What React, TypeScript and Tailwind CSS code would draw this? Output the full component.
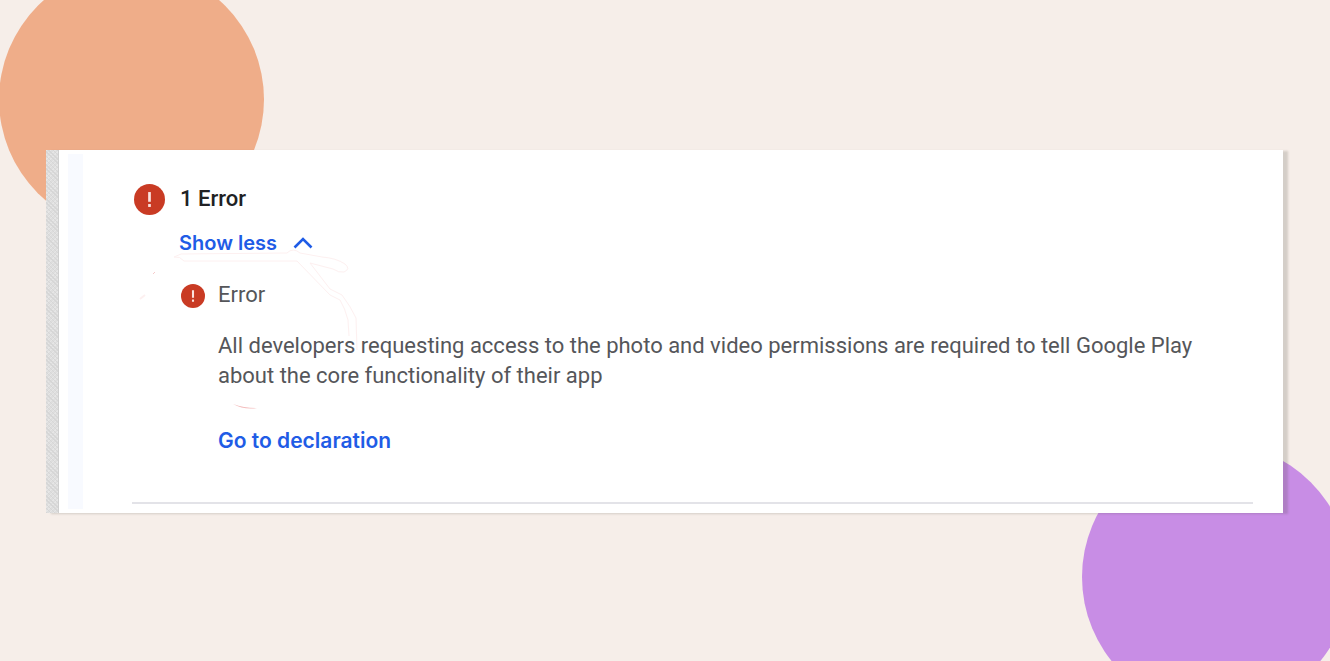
import { useState } from 'react';

interface ErrorItem {
  title: string;
  message: string;
  action: string;
}

const errors: ErrorItem[] = [
  {
    title: 'Error',
    message:
      'All developers requesting access to the photo and video permissions are required to tell Google Play about the core functionality of their app',
    action: 'Go to declaration',
  },
];

function ErrorIcon({ className }: { className: string }) {
  return (
    <svg viewBox="0 0 30 30" className={className} aria-hidden="true">
      <circle cx="15" cy="15" r="15" fill="#c93b24" />
      <rect x="13.7" y="7.8" width="2.6" height="9.4" fill="#fbe3df" />
      <rect x="13.7" y="19.4" width="2.6" height="2.8" fill="#fbe3df" />
    </svg>
  );
}

// Faint leftover pen strokes on the card
function PenMarks() {
  return (
    <svg
      className="pointer-events-none absolute top-0 left-0"
      width="340"
      height="280"
      viewBox="0 0 340 280"
      fill="none"
      aria-hidden="true"
    >
      <g stroke="#fdf0f0">
        <path d="M128 107 L135 104 L241 103 Q247 97 254 103 L276 107 Q290 108 299 114 Q305 119 298 122 Q293 123 287 119 L264 113" />
        <path d="M128 107 Q134 106 138 111 L251 111 L284 145 L294 150 Q299 158 302 170 L303 186" />
        <path d="M264 113 L284 139 L296 145 Q305 157 310 168 L311 200" />
        <path d="M107 124 L109 122" stroke="#f6caca" />
        <path d="M94 149 L99 145" strokeWidth="2" />
      </g>
      <path d="M187 254 Q198 258 211 258 Q198 260 187 254Z" fill="#f3b9b9" />
    </svg>
  );
}

export default function App() {
  const [expanded, setExpanded] = useState(true);

  return (
    <main className="relative min-h-screen overflow-hidden bg-[#f6eee9] pt-[150px] pr-[47px] pb-12 pl-[46px] font-['Roboto',sans-serif]">
      {/* Background circles */}
      <div className="absolute -top-[33px] -left-px size-[265px] rounded-full bg-[#efad89]" />
      <div className="absolute top-[443px] left-[1082px] size-[268px] rounded-full bg-[#c88de5]" />

      <section className="relative flex bg-white shadow-[5px_1px_2px_rgba(60,60,50,0.18)]">
        {/* Textured edge */}
        <div className="w-[13px] shrink-0 border-r border-[#cfcfcf] bg-[#dedede] bg-[repeating-linear-gradient(45deg,#d6d6d6_0,#d6d6d6_1px,transparent_1px,transparent_3px),repeating-linear-gradient(-45deg,#e6e6e6_0,#e6e6e6_1px,transparent_1px,transparent_3px)]" />
        <div className="my-1 ml-[9px] w-[15px] shrink-0 bg-[#f8faff]" />

        <div className="mr-[30px] ml-[49px] flex-1 pt-[33px] pb-[9px]">
          <div className="border-b-2 border-[#e3e3e8] pb-[45px] pl-[2px]">
            <header className="flex items-center gap-[15px]">
              <ErrorIcon className="size-[31px] shrink-0" />
              <h2 className="text-[22px] leading-8 font-medium text-[#202124]">
                {errors.length} Error
              </h2>
            </header>

            <div className="pl-[45px]">
              <button
                type="button"
                onClick={() => setExpanded(!expanded)}
                aria-expanded={expanded}
                className="mt-3 flex items-center gap-4 font-['Inter',sans-serif] text-[20px] leading-8 font-semibold text-[#1f5ce6]"
              >
                {expanded ? 'Show less' : 'Show more'}
                <svg
                  viewBox="0 0 20 12"
                  className={expanded ? 'h-3 w-5' : 'h-3 w-5 rotate-180'}
                  fill="none"
                  stroke="currentColor"
                  strokeWidth="2.6"
                  aria-hidden="true"
                >
                  <path d="M1.5 10.5 L10 2 L18.5 10.5" />
                </svg>
              </button>

              {expanded &&
                errors.map((error) => (
                  <article key={error.action} className="mt-5 flex gap-[13px] pl-[2px]">
                    <ErrorIcon className="mt-[5px] size-6 shrink-0" />
                    <div className="pr-12">
                      <h3 className="text-[22px] leading-8 text-[#55565a]">{error.title}</h3>
                      <p className="mt-5 text-[22px] leading-[30px] text-[#55565a]">{error.message}</p>
                      <a
                        href="#declaration"
                        className="mt-[34px] inline-block font-['Inter',sans-serif] text-[21px] leading-8 font-semibold text-[#1f5ce6]"
                      >
                        {error.action}
                      </a>
                    </div>
                  </article>
                ))}
            </div>
          </div>
        </div>

        <PenMarks />
      </section>
    </main>
  );
}
